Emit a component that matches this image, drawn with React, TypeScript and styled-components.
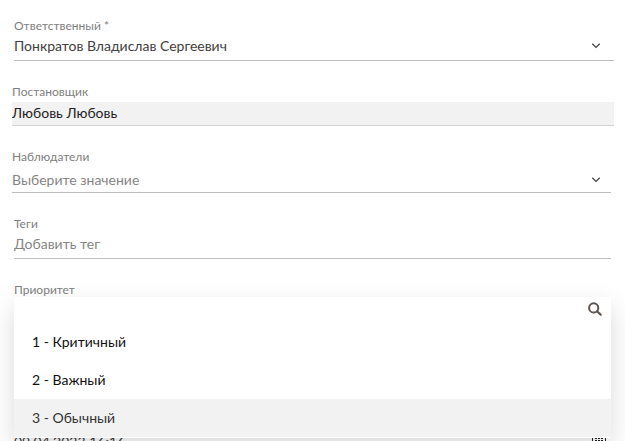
import React, { useState } from "react";
import styled, { createGlobalStyle, css } from "styled-components";

const GlobalStyle = createGlobalStyle`
  *, *::before, *::after { box-sizing: border-box; }
  body {
    margin: 0;
    background: #fff;
    color: #333;
    font-family: Lato, "Open Sans", sans-serif;
    font-size: 14px;
  }
`;

const Form = styled.form`
  display: flex;
  flex-direction: column;
  gap: 23px;
  height: 100vh;
  overflow: hidden;
  padding: 18px 11px 0 12px;
`;

const Field = styled.div<{ $indent?: boolean; $inset?: boolean }>`
  position: relative;
  display: flex;
  flex-direction: column;
  flex-shrink: 0;
  margin-left: ${(p) => (p.$indent ? 2 : 0)}px;
  margin-right: ${(p) => (p.$inset ? 3 : 0)}px;
`;

const DateField = styled(Field)`
  margin-top: 109px;
`;

const Label = styled.label`
  font-size: 12px;
  line-height: 16px;
  color: #808080;
`;

const Control = styled.div<{ $tall?: boolean }>`
  display: flex;
  align-items: center;
  height: ${(p) => (p.$tall ? 28 : 27)}px;
  padding-top: ${(p) => (p.$tall ? 2 : 0)}px;
  padding-bottom: ${(p) => (p.$tall ? 0 : 2)}px;
  border-bottom: 1px solid #bdbdbd;
`;

const controlText = css`
  flex: 1;
  min-width: 0;
  margin: 0;
  padding: 0;
  border: 0;
  outline: 0;
  background: transparent;
  color: #404040;
  font: inherit;
  line-height: 20px;
  &::placeholder {
    color: #858585;
    opacity: 1;
  }
`;

const TextInput = styled.input`
  ${controlText}
`;

const Select = styled.select<{ $empty?: boolean }>`
  ${controlText}
  appearance: none;
  color: ${(p) => (p.$empty ? "#858585" : "#404040")};
`;

const ReadonlyInput = styled.input`
  ${controlText}
  flex: none;
  width: 100%;
  height: 24px;
  margin-top: 2px;
  padding-bottom: 2px;
  background: #f2f2f2;
  border-bottom: 1px solid #d4d4d4;
  color: #222;
`;

const Chevron = styled.svg<{ $inset?: boolean }>`
  flex: none;
  width: 10px;
  height: 10px;
  margin-right: ${(p) => (p.$inset ? 10 : 13)}px;
  margin-left: -20px;
  pointer-events: none;
`;

const SideIcon = styled.svg`
  flex: none;
  width: 14px;
  height: 14px;
`;

const CalendarIcon = styled(SideIcon)`
  margin-right: 5px;
`;

const Dropdown = styled.div`
  position: absolute;
  z-index: 1;
  top: 15px;
  left: 0;
  right: 0;
  padding-bottom: 1px;
  background: #fff;
  box-shadow: 0 10px 24px rgba(0, 0, 0, 0.15);
`;

const SearchRow = styled.div`
  display: flex;
  align-items: center;
  height: 26px;
  padding: 0 9px 2px 18px;
`;

const Options = styled.div`
  display: flex;
  flex-direction: column;
`;

const Option = styled.button<{ $active: boolean }>`
  height: 38px;
  padding: 0 18px;
  border: 0;
  background: ${(p) => (p.$active ? "#f2f2f2" : "#fff")};
  color: ${(p) => (p.$active ? "#333" : "#111")};
  font: inherit;
  line-height: 20px;
  text-align: left;
`;

const ChevronDown = ({ inset }: { inset?: boolean }) => (
  <Chevron $inset={inset} viewBox="0 0 10 10" aria-hidden="true">
    <path d="M1.3 2.8 5 6.4 8.7 2.8" fill="none" stroke="#444" strokeWidth="1.3" />
  </Chevron>
);

const priorities = ["1 - Критичный", "2 - Важный", "3 - Обычный"];

export default function App() {
  const [priority, setPriority] = useState(priorities[2]);

  return (
    <>
      <GlobalStyle />
      <Form>
        <Field $indent>
          <Label htmlFor="responsible">Ответственный *</Label>
          <Control>
            <Select id="responsible">
              <option>Понкратов Владислав Сергеевич</option>
            </Select>
            <ChevronDown />
          </Control>
        </Field>

        <Field>
          <Label htmlFor="author">Постановщик</Label>
          <ReadonlyInput id="author" readOnly value="Любовь Любовь" />
        </Field>

        <Field $inset>
          <Label htmlFor="watchers">Наблюдатели</Label>
          <Control $tall>
            <Select id="watchers" $empty>
              <option>Выберите значение</option>
            </Select>
            <ChevronDown inset />
          </Control>
        </Field>

        <Field $indent $inset>
          <Label htmlFor="tags">Теги</Label>
          <Control>
            <TextInput id="tags" placeholder="Добавить тег" />
          </Control>
        </Field>

        <Field $indent $inset>
          <Label htmlFor="priority">Приоритет</Label>
          <Dropdown>
            <SearchRow>
              <TextInput id="priority" type="text" />
              <SideIcon viewBox="0 0 14 14" aria-hidden="true">
                <circle cx="5.7" cy="5.9" r="4.6" fill="none" stroke="#5c5350" strokeWidth="2" />
                <path d="m9.1 9.3 3.6 3.4" stroke="#5c5350" strokeWidth="2.2" strokeLinecap="round" />
              </SideIcon>
            </SearchRow>
            <Options role="listbox" aria-label="Приоритет">
              {priorities.map((name) => (
                <Option
                  key={name}
                  type="button"
                  role="option"
                  aria-selected={name === priority}
                  $active={name === priority}
                  onClick={() => setPriority(name)}
                >
                  {name}
                </Option>
              ))}
            </Options>
          </Dropdown>
        </Field>

        <DateField $indent $inset>
          <Control>
            <TextInput aria-label="Дата" defaultValue="09.04.2023 16:16" />
            <CalendarIcon viewBox="0 0 14 14" aria-hidden="true">
              <path
                d="M.5 0v13.5h13V0M3 1.5h2m1 0h2m1 0h2M3 3.5h2m1 0h2m1 0h2M3 5.5h2m1 0h2m1 0h2M3 7.5h2m1 0h2m1 0h2"
                fill="none"
                stroke="#222"
              />
            </CalendarIcon>
          </Control>
        </DateField>
      </Form>
    </>
  );
}
